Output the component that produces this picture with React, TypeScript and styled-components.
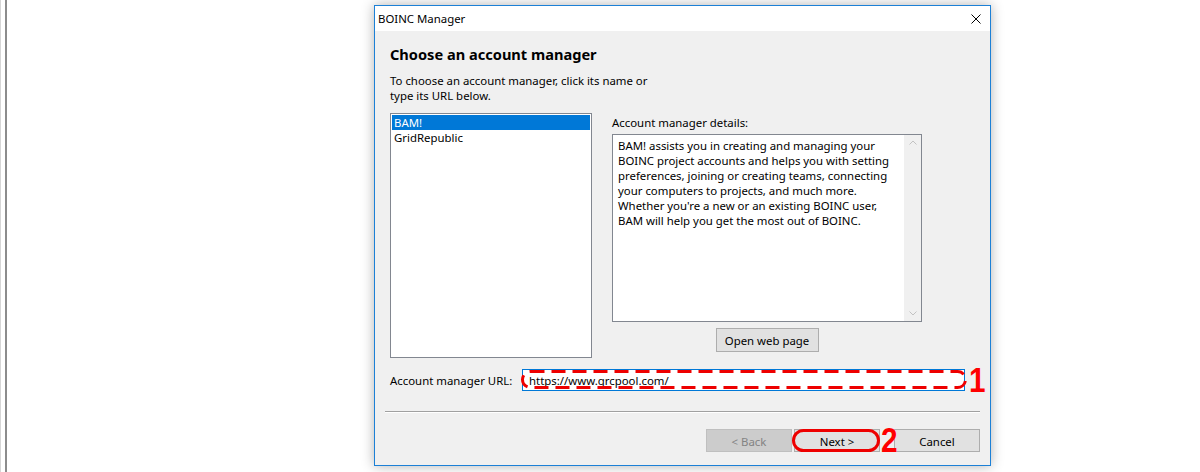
import React from "react";
import styled, { createGlobalStyle } from "styled-components";

const GlobalStyle = createGlobalStyle`
  html, body { margin: 0; padding: 0; background: #ffffff; }
  body {
    width: 1200px;
    height: 472px;
    overflow: hidden;
    font-family: "Segoe UI", "Noto Sans", sans-serif;
    font-size: 11.4px;
    color: #000;
  }
  * { box-sizing: border-box; }
`;

const Page = styled.div`
  display: flex;
  align-items: flex-start;
  width: 1200px;
  height: 472px;
  background: #fff;
`;

const LeftEdge = styled.div`
  flex-shrink: 0;
  width: 7px;
  height: 472px;
  border-left: 1px solid #d6d6d6;
  border-right: 2px solid #8c8c8c;
`;

const Dialog = styled.div`
  flex-shrink: 0;
  margin-left: 367px;
  margin-top: 5px;
  width: 617px;
  height: 461px;
  border: 1px solid #1c80d6;
  box-shadow: 0 0 12px rgba(0, 0, 0, 0.3);
  display: flex;
  flex-direction: column;
  background: #f0f0f0;
`;

const TitleBar = styled.div`
  height: 25px;
  background: #fff;
  display: flex;
  align-items: center;
  justify-content: space-between;
  padding: 0 9px 0 3px;
  line-height: 16px;
`;

const Body = styled.div`
  flex: 1;
  display: flex;
  flex-direction: column;
  padding: 0 10px;
`;

const Content = styled.div`
  display: flex;
  flex-direction: column;
  padding-left: 5px;
`;

const Heading = styled.div`
  margin-top: 13px;
  font-size: 14.6px;
  font-weight: 700;
  line-height: 20px;
`;

const Desc = styled.div`
  margin-top: 9px;
  line-height: 15px;
`;

const MainRow = styled.div`
  display: flex;
  gap: 20px;
  margin-top: 10px;
`;

const ListBox = styled.div`
  width: 202px;
  height: 245px;
  background: #fff;
  border: 1px solid #828790;
  padding: 1px;
  display: flex;
  flex-direction: column;
`;

const ListItem = styled.div<{ $selected?: boolean }>`
  height: 15px;
  line-height: 16px;
  padding-left: 2px;
  background: ${(p) => (p.$selected ? "#0078d7" : "transparent")};
  color: ${(p) => (p.$selected ? "#fff" : "#000")};
`;

const RightCol = styled.div`
  width: 310px;
  display: flex;
  flex-direction: column;
  align-items: center;
`;

const FieldLabel = styled.div`
  align-self: stretch;
  margin-top: 2px;
  line-height: 15px;
`;

const DetailBox = styled.div`
  align-self: stretch;
  margin-top: 4px;
  height: 188px;
  background: #fff;
  border: 1px solid #828790;
  display: flex;
`;

const DetailText = styled.div`
  flex: 1;
  padding: 3px 0 0 5px;
  line-height: 15px;
  white-space: pre-line;
`;

const ScrollBar = styled.div`
  width: 17px;
  background: #f0f0f0;
  display: flex;
  flex-direction: column;
  justify-content: space-between;
  align-items: center;
  padding: 5px 0;
`;

const Button = styled.div<{ $disabled?: boolean; $w?: number }>`
  width: ${(p) => p.$w ?? 86}px;
  height: 23px;
  display: flex;
  align-items: center;
  justify-content: center;
  padding-top: 1px;
  background: ${(p) => (p.$disabled ? "#cccccc" : "#e1e1e1")};
  border: 1px solid ${(p) => (p.$disabled ? "#bfbfbf" : "#adadad")};
  color: ${(p) => (p.$disabled ? "#838383" : "#000")};
  position: relative;
`;

const WebButton = styled(Button)`
  margin-top: 6px;
  height: 24px;
`;

const UrlRow = styled.div`
  position: relative;
  display: flex;
  align-items: center;
  margin-top: 11px;
  height: 22px;
`;

const UrlLabel = styled.div`
  width: 132px;
  line-height: 15px;
  padding-top: 1px;
`;

const UrlInput = styled.div`
  position: relative;
  width: 443px;
  height: 22px;
  background: #fff;
  border: 1px solid #0078d7;
  padding: 1px 0 0 6px;
  display: flex;
  align-items: center;
`;

const Callout = styled.svg`
  position: absolute;
  left: -2px;
  top: -1px;
  overflow: visible;
  pointer-events: none;
`;

const Marker = styled.div<{ $left: number; $top: number }>`
  position: absolute;
  left: ${(p) => p.$left}px;
  top: ${(p) => p.$top}px;
  font-family: "Liberation Sans", Arial, sans-serif;
  font-weight: 700;
  font-size: 35px;
  line-height: 35px;
  color: #ff0000;
  transform: scaleX(0.85);
  transform-origin: left top;
`;

const Separator = styled.div`
  margin-top: 20px;
  height: 2px;
  border-top: 1px solid #a0a0a0;
  border-bottom: 1px solid #ffffff;
`;

const ButtonRow = styled.div`
  position: relative;
  display: flex;
  justify-content: flex-end;
  margin-top: 16px;
  gap: 2px;
`;

const CancelButton = styled(Button)`
  margin-left: 12px;
`;

const CloseIcon = () => (
  <svg width="10" height="10" viewBox="0 0 10 10">
    <path d="M0.5 0.5 L9.5 9.5 M9.5 0.5 L0.5 9.5" stroke="#000" strokeWidth="1" fill="none" />
  </svg>
);

const Chevron = ({ up }: { up?: boolean }) => (
  <svg width="8" height="5" viewBox="0 0 8 5">
    <path
      d={up ? "M0.5 4.5 L4 1 L7.5 4.5" : "M0.5 0.5 L4 4 L7.5 0.5"}
      stroke="#c2c2c2"
      strokeWidth="1"
      fill="none"
    />
  </svg>
);

const details =
  "BAM! assists you in creating and managing your\nBOINC project accounts and helps you with setting\npreferences, joining or creating teams, connecting\nyour computers to projects, and much more.\nWhether you're a new or an existing BOINC user,\nBAM will help you get the most out of BOINC.";

export default function App() {
  return (
    <>
      <GlobalStyle />
      <Page>
        <LeftEdge />
        <Dialog>
          <TitleBar>
            <span>BOINC Manager</span>
            <CloseIcon />
          </TitleBar>
          <Body>
            <Content>
              <Heading>Choose an account manager</Heading>
              <Desc>
                To choose an account manager, click its name or
                <br />
                type its URL below.
              </Desc>
              <MainRow>
                <ListBox>
                  <ListItem $selected>BAM!</ListItem>
                  <ListItem>GridRepublic</ListItem>
                </ListBox>
                <RightCol>
                  <FieldLabel>Account manager details:</FieldLabel>
                  <DetailBox>
                    <DetailText>{details}</DetailText>
                    <ScrollBar>
                      <Chevron up />
                      <Chevron />
                    </ScrollBar>
                  </DetailBox>
                  <WebButton $w={103}>Open web page</WebButton>
                </RightCol>
              </MainRow>
              <UrlRow>
                <UrlLabel>Account manager URL:</UrlLabel>
                <UrlInput>
                  https://www.grcpool.com/
                  <Callout width="446" height="22">
                    <rect
                      x="1.5"
                      y="2.5"
                      width="443"
                      height="16"
                      rx="8"
                      fill="none"
                      stroke="#ee0000"
                      strokeWidth="3"
                      strokeDasharray="14 7"
                    />
                  </Callout>
                </UrlInput>
                <Marker $left={579} $top={-7}>1</Marker>
              </UrlRow>
            </Content>
            <Separator />
            <ButtonRow>
              <Button $disabled>&lt; Back</Button>
              <Button>
                Next &gt;
                <Callout width="88" height="23" style={{ left: -3, top: -1 }}>
                  <rect x="1.5" y="1.5" width="85" height="20" rx="10" fill="none" stroke="#ee0000" strokeWidth="3" />
                </Callout>
              </Button>
              <CancelButton>Cancel</CancelButton>
              <Marker $left={496} $top={-7}>2</Marker>
            </ButtonRow>
          </Body>
        </Dialog>
      </Page>
    </>
  );
}
